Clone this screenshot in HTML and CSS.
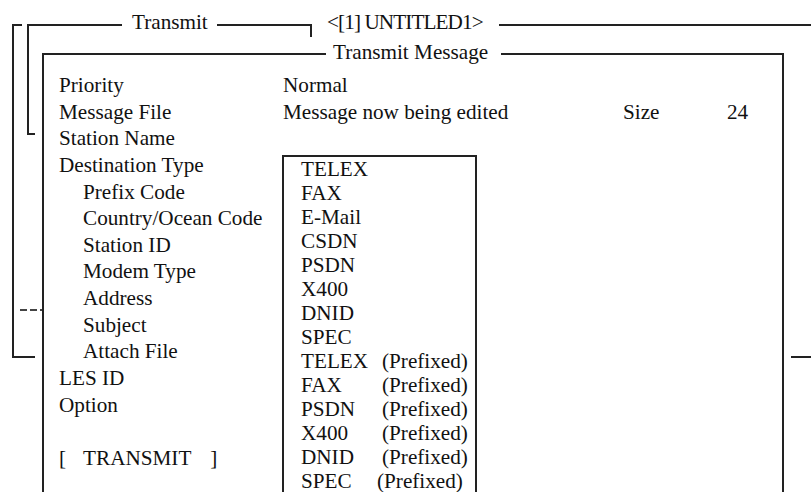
FILE: index.html
```html
<!DOCTYPE html>
<html lang="en">
<head>
	<meta charset="UTF-8">
	<title>Transmit Message</title>
	<link rel="stylesheet" href="styles.css">
</head>
<body>
	<div class="desk">
		<div class="win win-main"><span class="win-title title-main">&lt;[1] UNTITLED1&gt;</span></div>
		<div class="win win-menu"><span class="win-title title-menu">Transmit</span></div>
		<div class="dash"></div>
		<div class="win win-msg">
			<span class="win-title title-msg">Transmit Message</span>
			<div class="form">
				<ul class="labels">
					<li>Priority</li>
					<li>Message File</li>
					<li>Station Name</li>
					<li>Destination Type</li>
					<li class="sub">Prefix Code</li>
					<li class="sub">Country/Ocean Code</li>
					<li class="sub">Station ID</li>
					<li class="sub">Modem Type</li>
					<li class="sub">Address</li>
					<li class="sub">Subject</li>
					<li class="sub">Attach File</li>
					<li>LES ID</li>
					<li>Option</li>
					<li class="gap"></li>
					<li class="action"><span>[</span><span class="action-name">TRANSMIT</span><span>]</span></li>
				</ul>
				<div class="values">
					<div class="row">Normal</div>
					<div class="row file">
						<span class="file-name">Message now being edited</span>
						<span class="file-size">Size</span>
						<span>24</span>
					</div>
					<div class="row"></div>
					<ul class="listbox">
						<li>TELEX</li>
						<li>FAX</li>
						<li>E-Mail</li>
						<li>CSDN</li>
						<li>PSDN</li>
						<li>X400</li>
						<li>DNID</li>
						<li>SPEC</li>
						<li><span class="kind">TELEX</span><span>(Prefixed)</span></li>
						<li><span class="kind">FAX</span><span>(Prefixed)</span></li>
						<li><span class="kind">PSDN</span><span>(Prefixed)</span></li>
						<li><span class="kind">X400</span><span>(Prefixed)</span></li>
						<li><span class="kind">DNID</span><span>(Prefixed)</span></li>
						<li><span class="kind narrow">SPEC</span><span>(Prefixed)</span></li>
					</ul>
				</div>
			</div>
		</div>
	</div>
</body>
</html>
```

FILE: styles.css
```css
*{
	margin:0;
	padding:0;
	list-style:none;
	box-sizing:border-box;
}
body{
	background:#fff;
	font-family:"Liberation Serif","Times New Roman",serif;
	font-size:21.2px;
	color:#111;
	overflow:hidden;
}
.desk{
	position:relative;
	width:811px;
	height:492px;
	overflow:hidden;
}

/* windows stacked on the screen */
.win{
	position:absolute;
	background:#fff;
	border:2px solid #222;
}
.win-main{
	left:12px;
	top:24px;
	width:900px;
	height:334px;
}
.win-menu{
	left:27px;
	top:24px;
	width:285px;
	height:111px;
	border-right:0;
	box-shadow:0 0 0 5px #fff;
}
.win-menu::after{
	content:"";
	position:absolute;
	right:0;
	top:-2px;
	width:2px;
	height:13px;
	background:#222;
}
.win-msg{
	left:42px;
	top:53px;
	width:742px;
	height:600px;
	box-shadow:0 0 0 7px #fff;
}
.win-title{
	position:absolute;
	top:-16px;
	line-height:24px;
	background:#fff;
	white-space:nowrap;
}
.title-main{
	left:298px;
	padding:0 16px 0 15px;
	letter-spacing:-0.9px;
}
.title-menu{
	left:93px;
	padding:0 9px 0 10px;
}
.title-msg{
	top:-15px;
	left:282px;
	padding:0 13px 0 7px;
}
.dash{
	position:absolute;
	left:20px;
	top:309px;
	width:22px;
	height:2px;
	background:repeating-linear-gradient(90deg,#444 0 7px,transparent 7px 10px);
	z-index:2;
}

/* form */
.form{
	display:flex;
	padding:17px 0 0 15px;
}
.labels{
	width:223px;
	line-height:26.64px;
}
.labels .sub{
	padding-left:24px;
}
.labels .gap{
	height:26.64px;
}
.action{
	display:flex;
}
.action-name{
	margin:0 19px 0 17px;
}
.values{
	line-height:26.64px;
}
.row{
	height:26.64px;
	padding-left:1px;
}
.file{
	display:flex;
}
.file-name{
	width:340px;
}
.file-size{
	width:104px;
}
.listbox{
	margin-top:3px;
	width:195px;
	border:2px solid #222;
	padding-left:17px;
	line-height:24px;
}
.listbox li{
	display:flex;
}
.listbox .kind{
	width:81px;
}
.listbox .kind.narrow{
	width:76px;
}
```
